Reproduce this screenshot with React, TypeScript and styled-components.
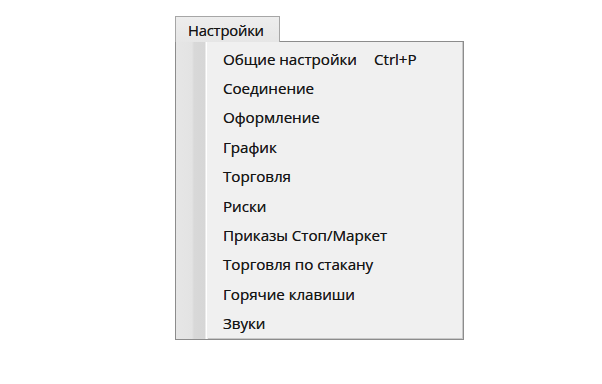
import React from "react";
import styled, { createGlobalStyle } from "styled-components";

const Global = createGlobalStyle`
  html, body { margin: 0; padding: 0; background: #ffffff; }
  body { font-family: "Open Sans", "Noto Sans", "DejaVu Sans", sans-serif; }
`;

const Page = styled.div`
  width: 602px;
  height: 384px;
  box-sizing: border-box;
  padding: 16px 0 0 175px;
  background: #ffffff;
`;

const MenuBar = styled.div`
  display: flex;
`;

const Tab = styled.div`
  position: relative;
  z-index: 1;
  box-sizing: border-box;
  width: 105px;
  height: 26px;
  margin-bottom: -1px;
  padding: 0 0 0 12px;
  display: flex;
  align-items: center;
  border: 1px solid #a6a6a6;
  border-bottom: none;
  background: linear-gradient(#ededed, #e6e6e6);
  color: #141414;
  font-size: 14.8px;
  letter-spacing: -0.2px;
  text-shadow: 0 0 0.5px rgba(20, 20, 20, 0.7);
`;

const Panel = styled.div`
  box-sizing: border-box;
  width: 289px;
  display: grid;
  grid-template-columns: 32px 1fr;
  border: 1px solid #8c8c8c;
  box-shadow: inset -1px -1px 0 #c8c8c8;
  background: #f0f0f0;
`;

const Gutter = styled.div`
  background: linear-gradient(
    to right,
    #e6e6e6 0px,
    #e3e3e3 16px,
    #d8d8d8 18px,
    #d6d6d6 29px,
    #ffffff 30px,
    #ffffff 31px,
    #f0f0f0 31px
  );
`;

const List = styled.div`
  display: flex;
  flex-direction: column;
  padding: 2px 0 1px 0;
`;

const Item = styled.div`
  height: 29.4px;
  display: grid;
  grid-template-columns: 151px auto;
  align-items: center;
  padding-left: 15px;
  color: #141414;
  font-size: 15.2px;
  letter-spacing: -0.05px;
  white-space: nowrap;
  text-shadow: 0 0 0.5px rgba(20, 20, 20, 0.7);
`;

const Label = styled.span``;

const Shortcut = styled.span`
  color: #141414;
`;

const items: { label: string; shortcut?: string }[] = [
  { label: "Общие настройки", shortcut: "Ctrl+P" },
  { label: "Соединение" },
  { label: "Оформление" },
  { label: "График" },
  { label: "Торговля" },
  { label: "Риски" },
  { label: "Приказы Стоп/Маркет" },
  { label: "Торговля по стакану" },
  { label: "Горячие клавиши" },
  { label: "Звуки" },
];

export default function App() {
  return (
    <>
      <Global />
      <Page>
        <MenuBar>
          <Tab>Настройки</Tab>
        </MenuBar>
        <Panel>
          <Gutter />
          <List>
            {items.map((it) => (
              <Item key={it.label}>
                <Label>{it.label}</Label>
                {it.shortcut && <Shortcut>{it.shortcut}</Shortcut>}
              </Item>
            ))}
          </List>
        </Panel>
      </Page>
    </>
  );
}
